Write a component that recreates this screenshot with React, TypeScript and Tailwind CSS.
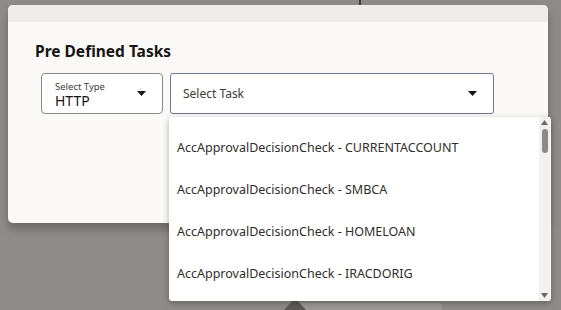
const tasks = [
  "AccApprovalDecisionCheck - CURRENTACCOUNT",
  "AccApprovalDecisionCheck - SMBCA",
  "AccApprovalDecisionCheck - HOMELOAN",
  "AccApprovalDecisionCheck - IRACDORIG",
];

const Caret = () => (
  <svg width="9" height="5" viewBox="0 0 9 5" className="shrink-0">
    <path d="M0 0h9L4.5 5z" fill="#161513" />
  </svg>
);

export default function App() {
  return (
    <div
      className="relative w-[561px] h-[310px] overflow-hidden bg-[#8e8b88]"
      style={{ fontFamily: '"Noto Sans", "Open Sans", sans-serif' }}
    >
      {/* page behind the modal */}
      <div className="absolute left-[359px] top-0 w-[2px] h-[6px] bg-[#3f3d3b]" />
      <div className="absolute left-[296px] top-[303px] w-[146px] h-[10px] bg-[#9c9a97] rounded-t-sm" />
      <div className="absolute left-[284px] top-[298px] w-0 h-0 border-l-[11px] border-r-[11px] border-b-[12px] border-l-transparent border-r-transparent border-b-[#5b5956]" />

      {/* modal card */}
      <div className="absolute left-[8px] top-[5px] w-[540px] h-[218px] rounded-[5px] bg-[#faf9f8] shadow-[0_6px_10px_rgba(0,0,0,0.25)] overflow-hidden">
        <div className="h-[17px] bg-[#eeedeb]" />
        <div className="px-[27px] pt-[19px]">
          <h1 className="text-[15.5px] font-bold text-[#161513] leading-5">
            Pre Defined Tasks
          </h1>
          <div className="flex gap-[7px] mt-[12px] pl-[6px]">
            <div className="w-[122px] h-[41px] border border-[#8b8885] rounded-[4px] bg-white flex items-center justify-between pl-[13px] pr-[16px]">
              <div className="flex flex-col pt-[1px]">
                <span className="text-[9.5px] leading-[12px] text-[#3d3b39]">Select Type</span>
                <span className="text-[14px] leading-[15px] text-[#161513]">HTTP</span>
              </div>
              <Caret />
            </div>
            <div className="w-[324px] h-[41px] border border-[#6c7591] rounded-[3px] bg-white flex items-center justify-between pl-[12px] pr-[16px]">
              <span className="text-[12px] text-[#3d3b39]">Select Task</span>
              <Caret />
            </div>
          </div>
        </div>
      </div>

      {/* open dropdown list */}
      <div className="absolute left-[169px] top-[117px] w-[382px] h-[184px] bg-white rounded-[3px] shadow-[0_2px_6px_rgba(0,0,0,0.3)] flex">
        <ul className="flex-1 pt-[10px]">
          {tasks.map((t) => (
            <li
              key={t}
              className="h-[42px] flex items-center pl-[8px] text-[12.5px] text-[#2e2d2b]"
            >
              {t}
            </li>
          ))}
        </ul>
        <div className="w-[11px] mr-[1px] bg-[#f1f1f1] flex flex-col items-center justify-between py-[3px]">
          <svg width="7" height="5" viewBox="0 0 7 5">
            <path d="M0 5h7L3.5 0z" fill="#6a6a6a" />
          </svg>
          <div className="flex-1 w-full flex flex-col items-center pt-[4px]">
            <div className="w-[6px] h-[24px] rounded-full bg-[#8a8a8a]" />
          </div>
          <svg width="7" height="5" viewBox="0 0 7 5">
            <path d="M0 0h7L3.5 5z" fill="#6a6a6a" />
          </svg>
        </div>
      </div>
    </div>
  );
}
